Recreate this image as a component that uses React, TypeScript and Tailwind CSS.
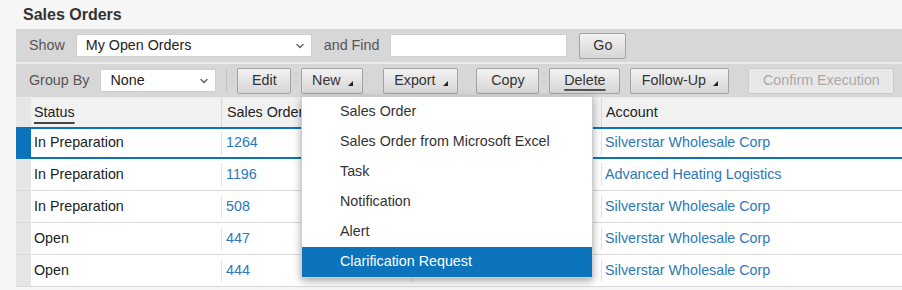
import { ChevronDown } from "lucide-react";

const MENU = [
  "Sales Order",
  "Sales Order from Microsoft Excel",
  "Task",
  "Notification",
  "Alert",
  "Clarification Request",
];

const ROWS = [
  { status: "In Preparation", id: "1264", account: "Silverstar Wholesale Corp", selected: true },
  { status: "In Preparation", id: "1196", account: "Advanced Heating Logistics" },
  { status: "In Preparation", id: "508", account: "Silverstar Wholesale Corp" },
  { status: "Open", id: "447", account: "Silverstar Wholesale Corp" },
  { status: "Open", id: "444", account: "Silverstar Wholesale Corp" },
];

function Caret() {
  return (
    <svg width="5" height="5" viewBox="0 0 5 5" className="ml-[7px] mt-[6px] shrink-0">
      <polygon points="5,0 5,5 0,5" fill="#222" />
    </svg>
  );
}

function Button({
  label,
  width,
  menu,
  labelClass = "",
}: {
  label: string;
  width: string;
  menu?: boolean;
  labelClass?: string;
}) {
  return (
    <button
      type="button"
      className={`flex h-[26px] items-center justify-center rounded-[2px] border border-[#a3a3a3] bg-linear-to-b from-[#f3f3f3] to-[#d5d5d5] text-[14.3px] text-[#333] ${width}`}
    >
      <span className={labelClass}>{label}</span>
      {menu && <Caret />}
    </button>
  );
}

function Select({ value, width }: { value: string; width: string }) {
  return (
    <div
      className={`flex h-[23px] items-center justify-between border border-[#cfcfcf] bg-white pl-[9px] pr-[5px] text-[14.3px] text-[#222] ${width}`}
    >
      <span>{value}</span>
      <ChevronDown size={12} strokeWidth={3} className="text-[#666]" />
    </div>
  );
}

export default function App() {
  const cols = "grid grid-cols-[15px_190px_191px_189px_1fr]";
  return (
    <div className="relative h-[290px] w-[902px] overflow-hidden bg-[#f6f6f6] font-['Liberation_Sans',Arial,sans-serif]">
      <div className="flex h-[29px] items-center pl-[23px] text-[16px] font-bold text-[#333]">
        Sales Orders
      </div>

      <div className="ml-[16px]">
        <div className="flex h-[33px] items-center bg-[#d7d7d7] pl-[13px] text-[14.3px] text-[#555]">
          <span>Show</span>
          <Select value="My Open Orders" width="ml-[11px] w-[236px]" />
          <span className="ml-[12px]">and Find</span>
          <div className="ml-[11px] h-[23px] w-[177px] border border-[#cfcfcf] bg-white" />
          <Button label="Go" width="ml-[12px] w-[47px] h-[25px]" />
        </div>
        <div className="h-[2px] bg-[#ececec]" />
        <div className="flex h-[33px] items-center bg-[#d7d7d7] pl-[13px] text-[14.3px] text-[#555]">
          <span>Group By</span>
          <Select value="None" width="ml-[11px] w-[116px]" />
          <div className="ml-[10px] h-[24px] w-px bg-[#c4c4c4]" />
          <Button label="Edit" width="ml-[10px] w-[54px]" />
          <Button label="New" width="ml-[10px] w-[62px]" menu />
          <Button label="Export" width="ml-[20px] w-[75px]" menu />
          <Button label="Copy" width="ml-[18px] w-[63px]" />
          <Button
            label="Delete"
            width="ml-[10px] w-[71px]"
            labelClass="underline decoration-[#555] decoration-2 underline-offset-[4px]"
          />
          <Button label="Follow-Up" width="ml-[10px] w-[99px]" menu />
          <button
            type="button"
            className="ml-[19px] flex h-[26px] w-[146px] items-center justify-center rounded-[2px] border border-[#cbcbcb] bg-[#e8e8e8] text-[14.3px] text-[#a9a9a9]"
          >
            Confirm Execution
          </button>
        </div>

        <div className="bg-white text-[14.3px]">
          <div className={`${cols} h-[30px] border-t border-[#ececec] bg-[#f1f1f1] text-[#222]`}>
            <div className="bg-[#e6e6e6]" />
            <div className="flex items-center pl-[3px]">
              <span className="underline decoration-[#444] decoration-2 underline-offset-[5px]">Status</span>
            </div>
            <div className="flex items-center border-l border-[#d9d9d9] pl-[5px]">Sales Order</div>
            <div className="flex items-center border-l border-[#d9d9d9] pl-[5px]" />
            <div className="flex items-center border-l border-[#d9d9d9] pl-[4px]">Account</div>
          </div>
          {ROWS.map((r) => {
            const sel = r.selected
              ? "shadow-[inset_0_2px_0_#0b74bd,inset_0_-2px_0_#0b74bd]"
              : "border-b border-[#dadada]";
            return (
              <div key={r.id} className={`${cols} h-[32px] ${sel}`}>
                <div className={r.selected ? "bg-[#0b74bd]" : "bg-[#e6e6e6]"} />
                <div className="flex items-center pl-[3px] text-[#222]">{r.status}</div>
                <div className="my-[4px] flex items-center border-l border-[#e2e2e2] pl-[4px] text-[#2b78b8]">
                  {r.id}
                </div>
                <div className="my-[4px] border-l border-[#e2e2e2]" />
                <div className="my-[4px] flex items-center border-l border-[#e2e2e2] pl-[3px] text-[#2b78b8]">
                  {r.account}
                </div>
              </div>
            );
          })}
        </div>
      </div>

      <div className="absolute left-[301px] top-[96px] w-[292px] border border-[#cdcdcd] bg-white shadow-[0_3px_8px_rgba(0,0,0,0.35)]">
        {MENU.map((m, i) => (
          <div
            key={m}
            className={`flex h-[30px] items-center pl-[38px] text-[14.3px] ${
              i === MENU.length - 1 ? "bg-[#0b74bd] text-white" : "text-[#333]"
            }`}
          >
            {m}
          </div>
        ))}
      </div>
    </div>
  );
}
